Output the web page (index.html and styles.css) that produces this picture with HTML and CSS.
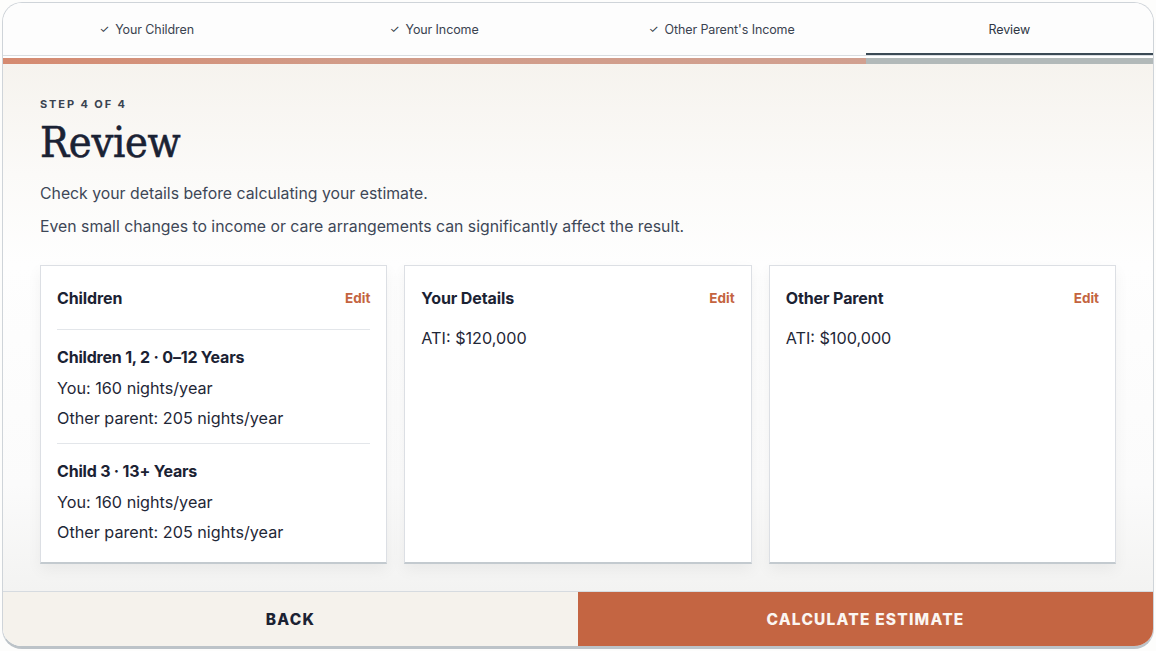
FILE: index.html
```html
<!DOCTYPE html>
<html lang="en">
<head>
    <meta charset="UTF-8">
    <meta name="viewport" content="width=device-width, initial-scale=1.0">
    <title>Review - Child Support Estimate</title>
    <link rel="stylesheet" href="styles.css">
</head>
<body>
    <div class="frame">
        <nav class="tabs">
            <div class="tab done"><span class="tick">&#10003;</span> Your Children</div>
            <div class="tab done"><span class="tick">&#10003;</span> Your Income</div>
            <div class="tab done"><span class="tick">&#10003;</span> Other Parent's Income</div>
            <div class="tab active">Review</div>
        </nav>
        <div class="progress"><div class="progress-fill"></div></div>

        <main class="content">
            <div class="step">STEP 4 OF 4</div>
            <h1>Review</h1>
            <p class="lead">Check your details before calculating your estimate.</p>
            <p class="lead">Even small changes to income or care arrangements can significantly affect the result.</p>

            <div class="cards">
                <section class="card">
                    <div class="card-head">
                        <h2>Children</h2>
                        <a href="#" class="edit">Edit</a>
                    </div>
                    <div class="group">
                        <h3>Children 1, 2 &middot; 0&ndash;12 Years</h3>
                        <p>You: 160 nights/year</p>
                        <p>Other parent: 205 nights/year</p>
                    </div>
                    <div class="group">
                        <h3>Child 3 &middot; 13+ Years</h3>
                        <p>You: 160 nights/year</p>
                        <p>Other parent: 205 nights/year</p>
                    </div>
                </section>
                <section class="card">
                    <div class="card-head plain">
                        <h2>Your Details</h2>
                        <a href="#" class="edit">Edit</a>
                    </div>
                    <p>ATI: $120,000</p>
                </section>
                <section class="card">
                    <div class="card-head plain">
                        <h2>Other Parent</h2>
                        <a href="#" class="edit">Edit</a>
                    </div>
                    <p>ATI: $100,000</p>
                </section>
            </div>
        </main>

        <footer class="actions">
            <button class="btn back">BACK</button>
            <button class="btn primary">CALCULATE ESTIMATE</button>
        </footer>
    </div>
</body>
</html>
```

FILE: styles.css
```css
body {
    margin: 0;
    padding: 2px;
    background: #fdfdfc;
    font-family: 'Inter', 'Noto Sans', sans-serif;
    color: #1b2233;
}
.frame {
    width: 1150px;
    height: 643px;
    border: 1px solid #cfd4d9;
    border-bottom: 3px solid #bcc3c8;
    border-radius: 20px;
    overflow: hidden;
    display: flex;
    flex-direction: column;
    background: #fff;
}
.tabs {
    display: grid;
    grid-template-columns: repeat(4, 1fr);
    height: 52px;
    border-bottom: 1px solid #d9dde1;
    background: #fdfdfd;
}
.tab {
    display: flex;
    align-items: center;
    justify-content: center;
    font-size: 12.5px;
    color: #3a4350;
    letter-spacing: -0.1px;
}
.tick {
    font-size: 11px;
    margin-right: 6px;
    color: #2a3340;
}
.tab.active {
    box-shadow: inset 0 -2px 0 #3b4a55;
    color: #2e3744;
}
.progress {
    height: 6px;
    margin-top: 2px;
    background: #b2b9b9;
}
.progress-fill {
    width: 75%;
    height: 100%;
    background: linear-gradient(90deg, #d58a70 0%, #d19b88 40%, #d1a090 100%);
}
.content {
    flex: 1;
    padding: 33px 37px 0 37px;
    background: linear-gradient(180deg, #f6f3ee 0%, #fbfaf8 110px, #fefefe 200px, #fbfbfb 420px, #f3f3f2 100%);
}
.step {
    font-size: 11px;
    font-weight: 700;
    letter-spacing: 1.9px;
    color: #3a4350;
    line-height: 14px;
}
h1 {
    font-family: 'DejaVu Serif Condensed', 'DejaVu Serif', serif;
    font-stretch: condensed;
    font-size: 43px;
    font-weight: 400;
    color: #1a2234;
    margin: 7px 0 17px;
    line-height: 48px;
    letter-spacing: -0.3px;
    -webkit-text-stroke: 0.6px #1a2234;
}
.lead {
    font-size: 15.8px;
    color: #3e4757;
    margin: 0 0 12px;
    line-height: 21px;
    letter-spacing: 0;
}
.cards {
    display: grid;
    grid-template-columns: repeat(3, 1fr);
    gap: 17px;
    margin-top: 28px;
    height: 299px;
}
.card {
    background: #fff;
    border: 1px solid #dcdfe4;
    border-bottom: 2px solid #c3cacf;
    box-shadow: 0 6px 14px rgba(0, 0, 0, 0.05);
    padding: 0 16px;
}
.card-head {
    display: flex;
    justify-content: space-between;
    align-items: center;
    height: 63px;
    border-bottom: 1px solid #e3e6ea;
}
.card-head.plain {
    border-bottom: none;
    height: 63px;
}
h2 {
    margin: 0;
    font-size: 16px;
    font-weight: 700;
    color: #1b2233;
    letter-spacing: -0.1px;
}
.edit {
    font-size: 13.5px;
    font-weight: 700;
    color: #c4643f;
    text-decoration: none;
}
.card p {
    margin: 0;
    font-size: 16.2px;
    line-height: 30px;
    color: #1f2737;
    letter-spacing: 0;
}
.card-head.plain + p {
    margin-top: -6px;
}
.group {
    padding: 13px 0 10px;
    border-bottom: 1px solid #e3e6ea;
}
.group:last-child {
    border-bottom: none;
}
h3 {
    margin: 0 0 2px;
    font-size: 16px;
    font-weight: 700;
    line-height: 28px;
    color: #1b2233;
    letter-spacing: -0.2px;
}
.actions {
    display: grid;
    grid-template-columns: 1fr 1fr;
    height: 54px;
    border-top: 1px solid #d6dbe0;
}
.btn {
    border: none;
    font-family: 'Inter', 'Noto Sans', sans-serif;
    font-size: 15.5px;
    font-weight: 800;
    letter-spacing: 1.2px;
    cursor: pointer;
}
.btn.back {
    background: #f5f2ec;
    color: #1b2233;
}
.btn.primary {
    background: #c46542;
    color: #fbf6f2;
}
```
